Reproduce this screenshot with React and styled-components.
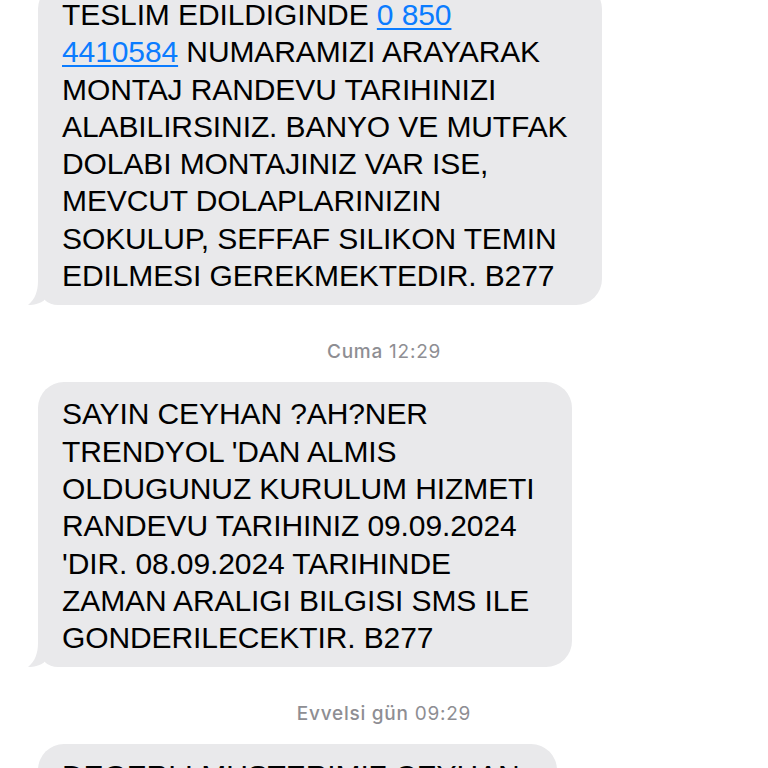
import React from 'react'
import styled, { createGlobalStyle } from 'styled-components'

const GlobalStyle = createGlobalStyle`
  html, body {
    margin: 0;
    padding: 0;
    background: #ffffff;
  }
  body {
    width: 768px;
    height: 768px;
    overflow: hidden;
  }
`

const thread = [
  {
    width: 564,
    lines: [
      ['TESLIM EDILDIGINDE ', { link: '0 850' }],
      [{ link: '4410584' }, ' NUMARAMIZI ARAYARAK'],
      ['MONTAJ RANDEVU TARIHINIZI'],
      ['ALABILIRSINIZ. BANYO VE MUTFAK'],
      ['DOLABI MONTAJINIZ VAR ISE,'],
      ['MEVCUT DOLAPLARINIZIN'],
      ['SOKULUP, SEFFAF SILIKON TEMIN'],
      ['EDILMESI GEREKMEKTEDIR. B277'],
    ],
  },
  { stamp: ['Cuma', '12:29'] },
  {
    width: 534,
    lines: [
      ['SAYIN CEYHAN ?AH?NER'],
      ["TRENDYOL 'DAN ALMIS"],
      ['OLDUGUNUZ KURULUM HIZMETI'],
      ['RANDEVU TARIHINIZ 09.09.2024'],
      ["'DIR. 08.09.2024 TARIHINDE"],
      ['ZAMAN ARALIGI BILGISI SMS ILE'],
      ['GONDERILECEKTIR. B277'],
    ],
  },
  { stamp: ['Evvelsi gün', '09:29'] },
  {
    width: 519,
    lines: [['DEGERLI MUSTERIMIZ CEYHAN'], ['SAHINER']],
  },
]

function Tail() {
  return (
    <TailSvg width="26" height="24" viewBox="0 0 26 24">
      <path
        d="M10 0 C10 10 7 18.5 0 24 C6 24.3 12 22.5 16 19.5 L16 0 Z"
        fill="#e9e9eb"
      />
    </TailSvg>
  )
}

function Message({ width, lines }) {
  return (
    <Bubble $width={width}>
      {lines.map((parts, i) => (
        <Line key={i}>
          {parts.map((p, j) =>
            typeof p === 'string' ? (
              <React.Fragment key={j}>{p}</React.Fragment>
            ) : (
              <Phone key={j}>{p.link}</Phone>
            )
          )}
        </Line>
      ))}
      <Tail />
    </Bubble>
  )
}

export default function App() {
  return (
    <>
      <GlobalStyle />
      <Thread>
        {thread.map((item, i) =>
          item.stamp ? (
            <Stamp key={i}>
              <Day>{item.stamp[0]}</Day> {item.stamp[1]}
            </Stamp>
          ) : (
            <Message key={i} width={item.width} lines={item.lines} />
          )
        )}
      </Thread>
    </>
  )
}

const Thread = styled.div`
  display: flex;
  flex-direction: column;
  align-items: flex-start;
  margin-top: -17px;
  padding-left: 38px;
`

const Bubble = styled.div`
  position: relative;
  box-sizing: border-box;
  width: ${(p) => p.$width}px;
  padding: 13px 24px 11px;
  background: #e9e9eb;
  border-radius: 26px 26px 26px 20px;
  font-family: 'Liberation Sans', Arial, sans-serif;
  font-size: 30px;
  line-height: 37.3px;
  letter-spacing: -0.1px;
  color: #000000;
`

const Line = styled.div`
  white-space: nowrap;
`

const Phone = styled.span`
  color: #0b7cff;
  text-decoration: underline;
  text-decoration-thickness: 2px;
  text-underline-offset: 3px;
`

const TailSvg = styled.svg`
  position: absolute;
  left: -10px;
  bottom: 0;
  display: block;
`

const Stamp = styled.div`
  align-self: stretch;
  margin: 36px 0 19px -38px;
  text-align: center;
  font-family: Inter, 'Liberation Sans', sans-serif;
  font-size: 19px;
  line-height: 22px;
  letter-spacing: 0.75px;
  color: #8e8e93;
`

const Day = styled.span`
  font-weight: 500;
`
